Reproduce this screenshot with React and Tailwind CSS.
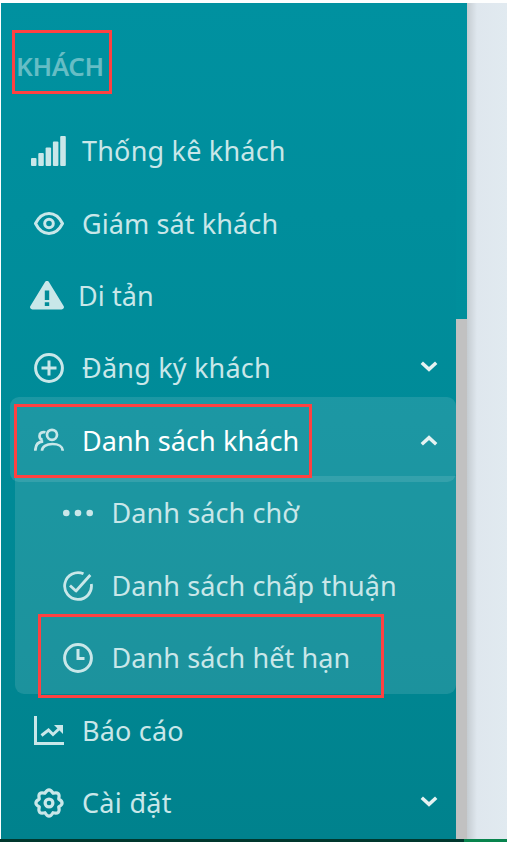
import React from "react";

function Icon({ name, className }) {
  const line = { fill: "none", stroke: "currentColor", strokeWidth: 3, strokeLinecap: "round", strokeLinejoin: "round" };
  const drawings = {
    signal: (
      <g fill="currentColor">
        <rect x="0" y="22" width="5.5" height="8" rx="1" />
        <rect x="7.300" y="17" width="5.5" height="13" rx="1" />
        <rect x="14.600" y="11.5" width="5.5" height="18.5" rx="1" />
        <rect x="21.900" y="5.5" width="5.5" height="24.5" rx="1" />
        <rect x="29.200" y="0" width="5.6" height="30" rx="1" />
      </g>
    ),
    eye: (
      <g {...line}>
        <path d="M1.5 11.5C4.5 5.5 9.5 1.5 15 1.5S25.500 5.500 28.500 11.500C25.500 17.500 20.500 21.500 15 21.500S4.500 17.500 1.500 11.500Z" />
        <circle cx="15" cy="11.500" r="4.300" />
      </g>
    ),
    warning: (
      <g>
        <path fill="currentColor" d="M14.900 1.200a2.300 2.300 0 0 1 4.200 0L33.600 25a2.300 2.300 0 0 1-2 3.500H2.400A2.300 2.300 0 0 1 .4 25Z" />
        <path fill="#008c99" d="M14.800 9.500h4.400v9.500h-4.400ZM14.800 21.300h4.400v3.700h-4.400Z" />
      </g>
    ),
    plus: (
      <g {...line}>
        <circle cx="15" cy="15" r="13.400" />
        <path strokeLinecap="butt" d="M15 7.500v15M7.500 15h15" />
      </g>
    ),
    people: (
      <g {...line} strokeWidth="2.700" strokeLinecap="butt">
        <circle cx="18" cy="6.800" r="5" />
        <path d="M8 22.800c0-4.300 4.300-6.800 10.400-6.800s10.300 2.500 10.300 6.800" />
        <path d="M11.500 4.300c-3.500-.8-6 .8-6 3.700 0 1.900 1.100 3.300 3 4" />
        <path d="M1.300 22.800c0-5.500 2.200-9 7.900-9.400" />
      </g>
    ),
    dots: (
      <g fill="currentColor">
        <circle cx="3.300" cy="4" r="3.300" />
        <circle cx="15" cy="4" r="3.300" />
        <circle cx="26.700" cy="4" r="3.300" />
      </g>
    ),
    check: (
      <g {...line} strokeWidth="2.800" strokeLinecap="butt">
        <path d="M20.500 2.800A13.400 13.400 0 1 0 28.300 13" />
        <path d="M7 14.500l6 5.500L27.300 4" />
      </g>
    ),
    clock: (
      <g {...line}>
        <circle cx="15" cy="15" r="13.400" />
        <path strokeLinecap="butt" strokeLinejoin="miter" d="M15 6v9.500h6.500" />
      </g>
    ),
    chart: (
      <g {...line} strokeLinecap="butt" strokeLinejoin="miter">
        <path d="M1.500 0v27.500H30" />
        <path d="M7.500 19.500l7-5.500 4.500 4.500 8-7.500" />
        <path fill="currentColor" stroke="none" d="M20 9h9v9Z" />
      </g>
    ),
    gear: (
      <g {...line} strokeWidth="3.200">
        <path d="M11 5.300Q15-1.500 19 5.300Q26.700 3.300 24.700 11Q31.500 15 24.700 19Q26.700 26.700 19 24.700Q15 31.500 11 24.700Q3.300 26.700 5.300 19Q-1.500 15 5.300 11Q3.300 3.300 11 5.300Z" />
        <circle cx="15" cy="15" r="3.900" />
      </g>
    ),
    down: <path {...line} strokeWidth="3.500" strokeLinecap="butt" strokeLinejoin="miter" d="M1.800 1.800 9 8.300l7.200-6.500" />,
    up: <path {...line} strokeWidth="3.500" strokeLinecap="butt" strokeLinejoin="miter" d="M1.800 9.200 9 2.700l7.200 6.500" />,
  };
  const boxes = {
    signal: "0 0 35 30", eye: "0 0 30 23", warning: "0 0 34 29", plus: "0 0 30 30",
    people: "0 0 30 24", dots: "0 0 30 8", check: "0 0 30 30", clock: "0 0 30 30",
    chart: "0 0 30 29", gear: "0 0 30 30", down: "0 0 18 11", up: "0 0 18 11",
  };
  return <svg viewBox={boxes[name]} className={"shrink-0 " + className}>{drawings[name]}</svg>;
}

function Row({ icon, iconClass, label, labelClass, arrow, arrowClass = "mb-[3px]", rowClass = "h-[72.6px] pl-[33px]" }) {
  return (
    <div className={"flex shrink-0 items-center pr-[18px] " + rowClass}>
      <Icon name={icon} className={iconClass} />
      <span className={"whitespace-nowrap leading-[36px] " + labelClass}>{label}</span>
      {arrow && <Icon name={arrow} className={"ml-auto h-[11px] w-[18px] text-[#e5f2f2] " + arrowClass} />}
    </div>
  );
}

export default function App() {
  return (
    <div className="relative flex h-[842px] w-[507px] flex-col overflow-hidden bg-[#fdfefe] pt-[3px] font-['Noto_Sans','Open_Sans',sans-serif] text-[27px] tracking-[0.1px] text-[#c9e7e9]">
      <div className="flex h-[836px] pl-px">
        <aside className="flex w-[455px] shrink-0 flex-col bg-linear-to-b from-[#0091a0] via-[#008b98] to-[#00828d]">
          <div className="flex h-[112px] shrink-0 items-center pl-[15px] pt-[13px]">
            <span className="text-[26px] font-semibold leading-[34px] tracking-[-0.4px] text-[#66bdc5]">KHÁCH</span>
          </div>
          <Row icon="signal" iconClass="-ml-[3px] h-[30px] w-[35px]" label="Thống kê khách" labelClass="ml-[16px] tracking-[0.2px]" />
          <Row icon="eye" iconClass="h-[23px] w-[30px]" label="Giám sát khách" labelClass="ml-[18px]" />
          <Row icon="warning" iconClass="-ml-[4px] mb-[2px] h-[29px] w-[34px]" label="Di tản" labelClass="ml-[14px]" />
          <Row icon="plus" iconClass="h-[30px] w-[30px]" label="Đăng ký khách" labelClass="ml-[18px] tracking-[0.2px]" arrow="down" rowClass="h-[64.2px] pl-[33px] pt-[7px]" />
          <div className="ml-[9px] shrink-0 rounded-[9px] bg-white/11">
            <Row icon="people" iconClass="mb-[2px] h-[24px] w-[30px]" label="Danh sách khách" labelClass="ml-[18px] text-white" arrow="up" arrowClass="" rowClass="h-[85px] pl-[24px] pt-[3px]" />
          </div>
          <div className="-mt-[6px] ml-[14px] shrink-0 rounded-b-[9px] bg-white/11 pt-px">
            <Row icon="dots" iconClass="h-[8px] w-[30px]" label="Danh sách chờ" labelClass="ml-[18.500px]" rowClass="h-[72.6px] pl-[48px]" />
            <Row icon="check" iconClass="h-[30px] w-[30px]" label="Danh sách chấp thuận" labelClass="ml-[18.500px]" rowClass="h-[72.6px] pl-[48px]" />
            <Row icon="clock" iconClass="h-[30px] w-[30px]" label="Danh sách hết hạn" labelClass="ml-[18.500px]" rowClass="h-[71.6px] pl-[48px]" />
          </div>
          <Row icon="chart" iconClass="h-[29px] w-[30px]" label="Báo cáo" labelClass="ml-[18px] tracking-[0.2px]" rowClass="h-[73px] pl-[33px] pt-px" />
          <Row icon="gear" iconClass="h-[30px] w-[30px]" label="Cài đặt" labelClass="ml-[18px] tracking-[0.3px]" arrow="down" rowClass="h-[72px] pl-[33px] pt-px" />
        </aside>
        <div className="flex w-[11px] shrink-0 flex-col">
          <div className="h-[316px] bg-linear-to-b from-[#0091a0] to-[#008e9b]" />
          <div className="flex-1 bg-[#c1c1c1]" />
        </div>
        <main className="flex-1 bg-linear-to-r from-[#c5ccd1] via-[#dfe7ee] via-25% to-[#e1eaf0]" />
      </div>
      <div className="flex h-[3px]">
        <div className="w-[464px] bg-[#00382e]" />
        <div className="flex-1 bg-[#08844e]" />
      </div>
      <div className="absolute left-[12px] top-[30px] h-[64px] w-[100px] border-[3px] border-[#ff4141]" />
      <div className="absolute left-[14px] top-[404px] h-[74px] w-[298px] border-[3px] border-[#ff4141]" />
      <div className="absolute left-[38px] top-[614px] h-[84px] w-[346px] border-[3px] border-[#ff4141]" />
    </div>
  );
}
